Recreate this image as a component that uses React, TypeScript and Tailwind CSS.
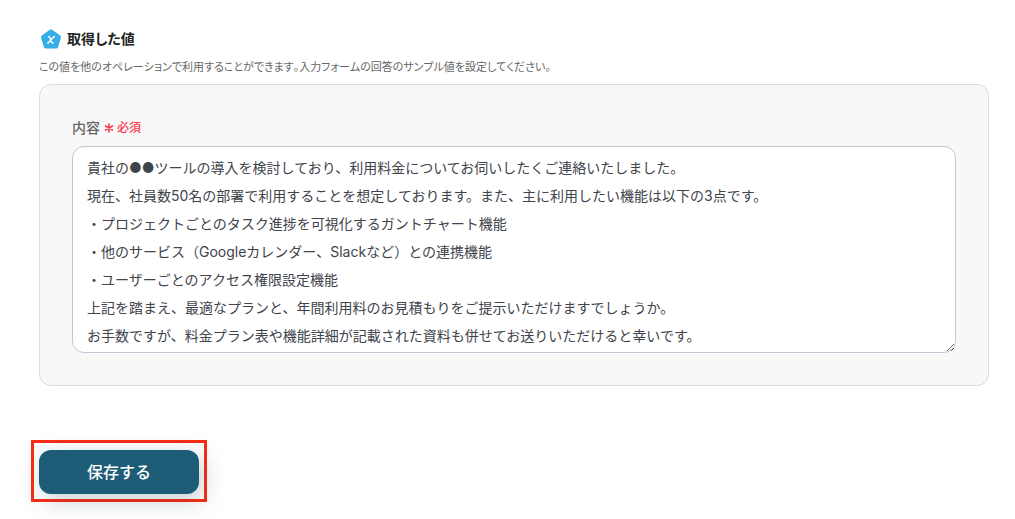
const sampleText = `貴社の●●ツールの導入を検討しており、利用料金についてお伺いしたくご連絡いたしました。
現在、社員数50名の部署で利用することを想定しております。また、主に利用したい機能は以下の3点です。
・プロジェクトごとのタスク進捗を可視化するガントチャート機能
・他のサービス（Googleカレンダー、Slackなど）との連携機能
・ユーザーごとのアクセス権限設定機能
上記を踏まえ、最適なプランと、年間利用料のお見積もりをご提示いただけますでしょうか。
お手数ですが、料金プラン表や機能詳細が記載された資料も併せてお送りいただけると幸いです。`;

function ValueIcon() {
  return (
    <svg className="h-6 w-6 shrink-0" viewBox="0 0 24 24" aria-hidden="true">
      <path
        d="M12 4.4 20 10.1 17.1 19.6H6.9L4 10.1Z"
        fill="#36ade6"
        stroke="#36ade6"
        strokeWidth="4"
        strokeLinejoin="round"
      />
      <path
        d="M9.6 9.7h.8L13.2 16h.9M15.4 9.7h-.6L9.2 16h-.6"
        fill="none"
        stroke="#fff"
        strokeWidth="1.4"
        strokeLinecap="round"
        strokeLinejoin="round"
      />
    </svg>
  );
}

function RequiredIcon() {
  return (
    <svg className="h-2.5 w-2.5 shrink-0" viewBox="0 0 10 10" aria-hidden="true">
      <path
        d="M5 1v8M1.5 3l7 4M8.5 3l-7 4"
        stroke="#fb3b4f"
        strokeWidth="1.6"
        strokeLinecap="round"
      />
    </svg>
  );
}

export default function App() {
  return (
    <main className="min-h-screen bg-white pt-[27px] pr-[26px] pb-4 pl-[39px] font-['Inter','Noto_Sans_CJK_JP',sans-serif]">
      <header>
        <h1 className="flex items-center gap-1 text-sm leading-6 font-bold text-[#222] [font-feature-settings:'palt']">
          <ValueIcon />
          取得した値
        </h1>
        <p className="mt-[5px] text-[11px] leading-[22px] text-[#666] [font-feature-settings:'palt'] [font-kerning:none]">
          この値を他のオペレーションで利用することができます。入力フォームの回答のサンプル値を設定してください。
        </p>
      </header>

      <form onSubmit={(event) => event.preventDefault()}>
        <section className="mt-1.5 rounded-xl border border-[#d9dce3] bg-[#f8f8f8] p-8">
          <label
            htmlFor="content"
            className="mb-2 flex items-center gap-1 text-sm leading-[21px] font-medium text-[#666]"
          >
            内容
            <span className="flex items-center gap-[3px] text-xs text-[#fb3b4f]">
              <RequiredIcon />
              必須
            </span>
          </label>
          <textarea
            id="content"
            required
            rows={7}
            spellCheck={false}
            defaultValue={sampleText}
            className="block w-full overflow-hidden rounded-xl border border-[#c0c6d3] bg-white px-3.5 pt-[7px] pb-0.5 text-sm leading-7 text-[#40444c] outline-none"
          />
        </section>

        <div className="mt-[54px] -ml-2 w-fit border-[3px] border-[#fa2d14] px-[5px] pt-[7px] pb-[5px]">
          <button
            type="submit"
            className="block h-11 w-40 rounded-xl bg-[#1d5c77] text-base font-medium text-white shadow-[4px_6px_24px_rgba(29,60,77,0.25)]"
          >
            保存する
          </button>
        </div>
      </form>
    </main>
  );
}
